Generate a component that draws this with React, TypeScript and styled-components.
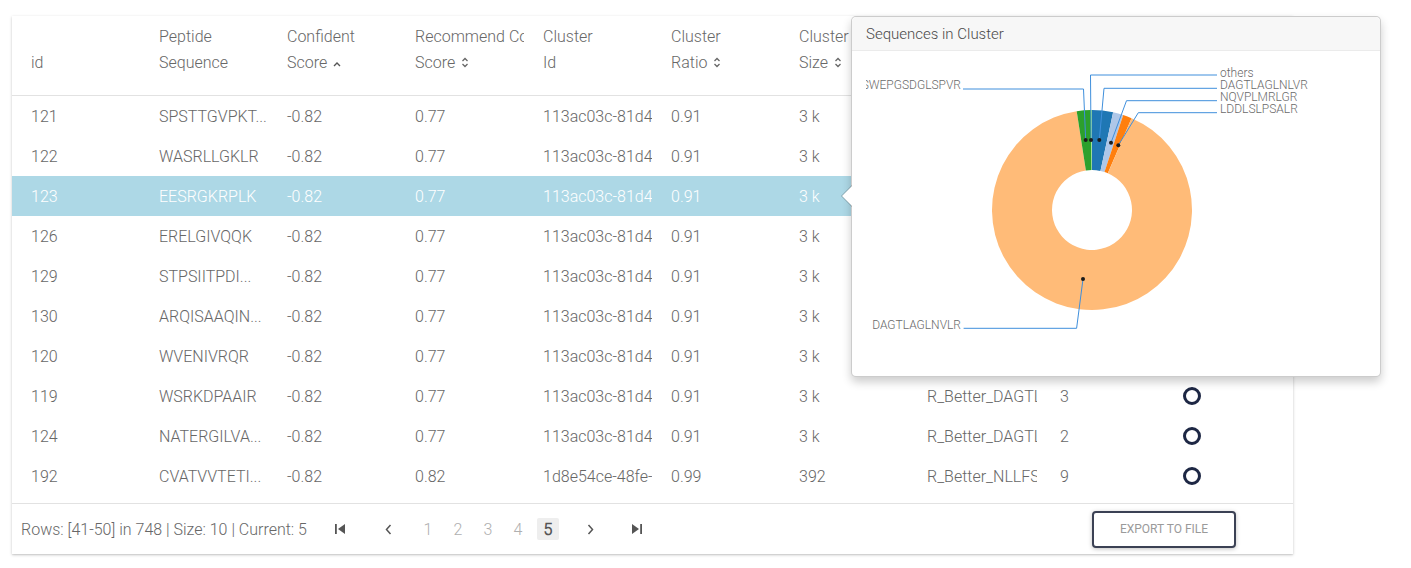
import React from "react";
import styled, { createGlobalStyle } from "styled-components";

const GlobalStyle = createGlobalStyle`
  body {
    margin: 0;
    background: #fff;
    font-family: "Roboto Light", Roboto, "Noto Sans", sans-serif;
  }
`;

const COLS = "128px 128px 128px 128px 128px 128px 128px 129px 127px 129px";
const TEXT = "#676767";

const Page = styled.div`
  position: relative;
  padding: 16px 0 14px 12px;
`;

const Card = styled.div`
  width: 1281px;
  background: #fff;
  box-shadow: 0 1px 3px rgba(0, 0, 0, 0.2), 0 1px 1px rgba(0, 0, 0, 0.06);
`;

const HeadRow = styled.div`
  display: grid;
  grid-template-columns: ${COLS};
  height: 79px;
  border-bottom: 1px solid #e2e2e2;
`;

const HeadCell = styled.div`
  display: flex;
  align-items: flex-end;
  padding: 0 0 19px 19px;
  overflow: hidden;
  white-space: nowrap;
  font-size: 16px;
  font-weight: 300;
  line-height: 26px;
  color: ${TEXT};
`;

const SortMark = styled.svg`
  margin-left: 6px;
  vertical-align: 1px;
`;

const Body = styled.div`
  padding-bottom: 7px;
`;

const Row = styled.div<{ $active?: boolean }>`
  display: grid;
  grid-template-columns: ${COLS};
  height: 40px;
  background: ${(p) => (p.$active ? "#add8e6" : "transparent")};
  color: ${(p) => (p.$active ? "#fff" : TEXT)};
`;

const Cell = styled.div<{ $pad?: number }>`
  padding-left: ${(p) => p.$pad ?? 19}px;
  line-height: 41px;
  overflow: hidden;
  white-space: nowrap;
  font-size: 16px;
  font-weight: 300;
`;

const MarkCell = styled.div`
  display: flex;
  align-items: center;
  padding-left: 19px;
`;

const Ring = styled.span`
  display: block;
  width: 18px;
  height: 18px;
  box-sizing: border-box;
  border: 3px solid #1d2744;
  border-radius: 50%;
`;

const Footer = styled.div`
  display: flex;
  align-items: center;
  height: 50px;
  border-top: 1px solid #e2e2e2;
  padding-left: 9px;
`;

const Info = styled.div`
  width: 295px;
  font-size: 16px;
  font-weight: 300;
  color: ${TEXT};
  white-space: nowrap;
`;

const Pager = styled.div`
  display: flex;
  align-items: center;
  height: 24px;
`;

const PageBtn = styled.div<{ $w: number }>`
  width: ${(p) => p.$w}px;
  display: flex;
  justify-content: center;
  align-items: center;
  color: #555;
`;

const PageNum = styled.span<{ $current?: boolean }>`
  display: inline-flex;
  justify-content: center;
  align-items: center;
  width: 22px;
  height: 22px;
  border-radius: 2px;
  font-size: 16px;
  font-weight: ${(p) => (p.$current ? 700 : 300)};
  color: ${(p) => (p.$current ? "#555" : "#b0b0b0")};
  background: ${(p) => (p.$current ? "#eeeeee" : "transparent")};
`;

const ExportButton = styled.button`
  margin-left: auto;
  margin-right: 57px;
  width: 144px;
  height: 37px;
  border: 2px solid #3b4154;
  border-radius: 4px;
  background: #fff;
  color: #9a9a9a;
  font-family: Roboto, sans-serif;
  font-size: 12px;
  font-weight: 400;
  text-transform: uppercase;
  box-shadow: 0 1px 4px rgba(0, 0, 0, 0.25);
`;

const Popover = styled.div`
  position: absolute;
  left: 851px;
  top: 16px;
  width: 530px;
  height: 361px;
  box-sizing: border-box;
  background: #fff;
  border: 1px solid rgba(0, 0, 0, 0.2);
  border-radius: 5px;
  box-shadow: 0 5px 10px rgba(0, 0, 0, 0.2);

  &::before,
  &::after {
    content: "";
    position: absolute;
    width: 0;
    height: 0;
    border-style: solid;
    border-color: transparent;
  }
  &::before {
    left: -11px;
    top: 168px;
    border-width: 11px 11px 11px 0;
    border-right-color: rgba(0, 0, 0, 0.25);
  }
  &::after {
    left: -10px;
    top: 169px;
    border-width: 10px 10px 10px 0;
    border-right-color: #fff;
  }
`;

const PopTitle = styled.div`
  height: 33px;
  line-height: 34px;
  padding: 0 14px;
  background: #f7f7f7;
  border-bottom: 1px solid #ebebeb;
  border-radius: 5px 5px 0 0;
  font-size: 15px;
  font-weight: 300;
  color: #4a4a4a;
`;

const PopBody = styled.div`
  padding: 0 14px;
`;

const ChartText = styled.text`
  font-family: "Roboto Light", Roboto, sans-serif;
  font-size: 12px;
  font-weight: 300;
  fill: #6a6a6a;
`;

type Rec = {
  id: number;
  seq: string;
  conf: string;
  rec: string;
  cluster: string;
  ratio: string;
  size: string;
  name: string;
  count: number;
};

const rows: Rec[] = [
  { id: 121, seq: "SPSTTGVPKT...", conf: "-0.82", rec: "0.77", cluster: "113ac03c-81d4-4c4e", ratio: "0.91", size: "3 k", name: "R_Better_DAGTLAGLNVLR", count: 4 },
  { id: 122, seq: "WASRLLGKLR", conf: "-0.82", rec: "0.77", cluster: "113ac03c-81d4-4c4e", ratio: "0.91", size: "3 k", name: "R_Better_DAGTLAGLNVLR", count: 3 },
  { id: 123, seq: "EESRGKRPLK", conf: "-0.82", rec: "0.77", cluster: "113ac03c-81d4-4c4e", ratio: "0.91", size: "3 k", name: "R_Better_DAGTLAGLNVLR", count: 5 },
  { id: 126, seq: "ERELGIVQQK", conf: "-0.82", rec: "0.77", cluster: "113ac03c-81d4-4c4e", ratio: "0.91", size: "3 k", name: "R_Better_DAGTLAGLNVLR", count: 2 },
  { id: 129, seq: "STPSIITPDI...", conf: "-0.82", rec: "0.77", cluster: "113ac03c-81d4-4c4e", ratio: "0.91", size: "3 k", name: "R_Better_DAGTLAGLNVLR", count: 3 },
  { id: 130, seq: "ARQISAAQIN...", conf: "-0.82", rec: "0.77", cluster: "113ac03c-81d4-4c4e", ratio: "0.91", size: "3 k", name: "R_Better_DAGTLAGLNVLR", count: 6 },
  { id: 120, seq: "WVENIVRQR", conf: "-0.82", rec: "0.77", cluster: "113ac03c-81d4-4c4e", ratio: "0.91", size: "3 k", name: "R_Better_DAGTLAGLNVLR", count: 2 },
  { id: 119, seq: "WSRKDPAAIR", conf: "-0.82", rec: "0.77", cluster: "113ac03c-81d4-4c4e", ratio: "0.91", size: "3 k", name: "R_Better_DAGTLAGLNVLR", count: 3 },
  { id: 124, seq: "NATERGILVA...", conf: "-0.82", rec: "0.77", cluster: "113ac03c-81d4-4c4e", ratio: "0.91", size: "3 k", name: "R_Better_DAGTLAGLNVLR", count: 2 },
  { id: 192, seq: "CVATVVTETI...", conf: "-0.82", rec: "0.82", cluster: "1d8e54ce-48fe-4a1b", ratio: "0.99", size: "392", name: "R_Better_NLLFSLPSR", count: 9 },
];

const SortUp = () => (
  <SortMark width="8" height="6" viewBox="0 0 8 6">
    <path d="M1 5 L4 2 L7 5" fill="none" stroke="#555" strokeWidth="1.4" />
  </SortMark>
);

const SortBoth = () => (
  <SortMark width="8" height="13" viewBox="0 0 8 13" style={{ verticalAlign: -1 }}>
    <path d="M1.5 5 L4 2.5 L6.5 5 M1.5 8 L4 10.5 L6.5 8" fill="none" stroke="#666" strokeWidth="1.3" />
  </SortMark>
);

const CX = 1092;
const CY = 210;
const R = 100;
const RI = 40;

const pt = (r: number, a: number) => {
  const t = (a * Math.PI) / 180;
  return [CX + r * Math.sin(t), CY - r * Math.cos(t)];
};

const arcPath = (a0: number, a1: number) => {
  const large = a1 - a0 > 180 ? 1 : 0;
  const [x0, y0] = pt(R, a0);
  const [x1, y1] = pt(R, a1);
  const [x2, y2] = pt(RI, a1);
  const [x3, y3] = pt(RI, a0);
  return `M${x0},${y0} A${R},${R} 0 ${large} 1 ${x1},${y1} L${x2},${y2} A${RI},${RI} 0 ${large} 0 ${x3},${y3} Z`;
};

const slices = [
  { a0: 0, a1: 12.2, color: "#1f77b4" },
  { a0: 12.2, a1: 18.2, color: "#aec7e8" },
  { a0: 18.2, a1: 23.3, color: "#ff7f0e" },
  { a0: 23.3, a1: 351.2, color: "#ffbb78" },
  { a0: 351.2, a1: 359.4, color: "#2ca02c" },
  { a0: 359.4, a1: 360, color: "#98df8a" },
];

const labels = [
  { text: "SWEPGSDGLSPVR", pts: "1085.7,140 1083.5,89 963,89", x: 961, y: 89, anchor: "end", dot: [1085.7, 140] },
  { text: "others", pts: "1091,140 1090.5,75 1217,75", x: 1220, y: 76.5, anchor: "start", dot: [1091, 140] },
  { text: "DAGTLAGLNLVR", pts: "1099.3,140 1104,88.3 1217,88.3", x: 1220, y: 88.8, anchor: "start", dot: [1099.3, 140] },
  { text: "NQVPLMRLGR", pts: "1111,142.7 1126.5,100.7 1217,100.7", x: 1220, y: 101.2, anchor: "start", dot: [1111, 142.7] },
  { text: "LDDLSLPSALR", pts: "1118.3,145.3 1138.3,112.7 1217,112.7", x: 1220, y: 113.2, anchor: "start", dot: [1118.3, 145.3] },
  { text: "DAGTLAGLNVLR", pts: "1083,279 1076.6,328.3 963.6,328.3", x: 961, y: 328.5, anchor: "end", dot: [1083, 279] },
];

function ClusterChart() {
  return (
    <svg width="500" height="325" viewBox="866 51 500 325">
      {slices.map((s, i) => (
        <path key={i} d={arcPath(s.a0, s.a1)} fill={s.color} />
      ))}
      {labels.map((l) => (
        <g key={l.text + l.y}>
          <polyline points={l.pts} fill="none" stroke="#3f8fdc" strokeWidth="1" />
          <circle cx={l.dot[0]} cy={l.dot[1]} r="2" fill="#1a1a1a" />
          <ChartText x={l.x} y={l.y} textAnchor={l.anchor as "start" | "end"}>
            {l.text}
          </ChartText>
        </g>
      ))}
    </svg>
  );
}

const FirstIcon = () => (
  <svg width="10" height="10" viewBox="0 0 10 10">
    <rect x="0" y="0" width="1.8" height="10" fill="#555" />
    <path d="M10 0 L3 5 L10 10 Z" fill="#555" />
  </svg>
);

const LastIcon = () => (
  <svg width="10" height="10" viewBox="0 0 10 10">
    <path d="M0 0 L7 5 L0 10 Z" fill="#555" />
    <rect x="8.2" y="0" width="1.8" height="10" fill="#555" />
  </svg>
);

const PrevIcon = () => (
  <svg width="7" height="11" viewBox="0 0 7 11">
    <path d="M5.5 1 L1.5 5.5 L5.5 10" fill="none" stroke="#555" strokeWidth="1.5" />
  </svg>
);

const NextIcon = () => (
  <svg width="7" height="11" viewBox="0 0 7 11">
    <path d="M1.5 1 L5.5 5.5 L1.5 10" fill="none" stroke="#555" strokeWidth="1.5" />
  </svg>
);

export default function App() {
  return (
    <>
      <GlobalStyle />
      <Page>
        <Card>
          <HeadRow>
            <HeadCell><div>id</div></HeadCell>
            <HeadCell><div>Peptide<br />Sequence</div></HeadCell>
            <HeadCell><div>Confident<br />Score<SortUp /></div></HeadCell>
            <HeadCell><div>Recommend Confident<br />Score<SortBoth /></div></HeadCell>
            <HeadCell><div>Cluster<br />Id</div></HeadCell>
            <HeadCell><div>Cluster<br />Ratio<SortBoth /></div></HeadCell>
            <HeadCell><div>Cluster<br />Size<SortBoth /></div></HeadCell>
            <HeadCell><div>Cluster<br />Name</div></HeadCell>
            <HeadCell><div>Peptide<br />Count</div></HeadCell>
            <HeadCell><div>Select</div></HeadCell>
          </HeadRow>
          <Body>
            {rows.map((r) => (
              <Row key={r.id} $active={r.id === 123}>
                <Cell>{r.id}</Cell>
                <Cell>{r.seq}</Cell>
                <Cell>{r.conf}</Cell>
                <Cell>{r.rec}</Cell>
                <Cell>{r.cluster}</Cell>
                <Cell>{r.ratio}</Cell>
                <Cell>{r.size}</Cell>
                <Cell>{r.name}</Cell>
                <Cell $pad={23}>{r.count}</Cell>
                <MarkCell><Ring /></MarkCell>
              </Row>
            ))}
          </Body>
          <Footer>
            <Info>Rows: [41-50] in 748 | Size: 10 | Current: 5</Info>
            <Pager>
              <PageBtn $w={48}><FirstIcon /></PageBtn>
              <PageBtn $w={49}><PrevIcon /></PageBtn>
              {[1, 2, 3, 4, 5].map((n) => (
                <PageBtn key={n} $w={30}>
                  <PageNum $current={n === 5}>{n}</PageNum>
                </PageBtn>
              ))}
              <PageBtn $w={54}><NextIcon /></PageBtn>
              <PageBtn $w={40}><LastIcon /></PageBtn>
            </Pager>
            <ExportButton>Export to file</ExportButton>
          </Footer>
        </Card>
        <Popover>
          <PopTitle>Sequences in Cluster</PopTitle>
          <PopBody>
            <ClusterChart />
          </PopBody>
        </Popover>
      </Page>
    </>
  );
}
